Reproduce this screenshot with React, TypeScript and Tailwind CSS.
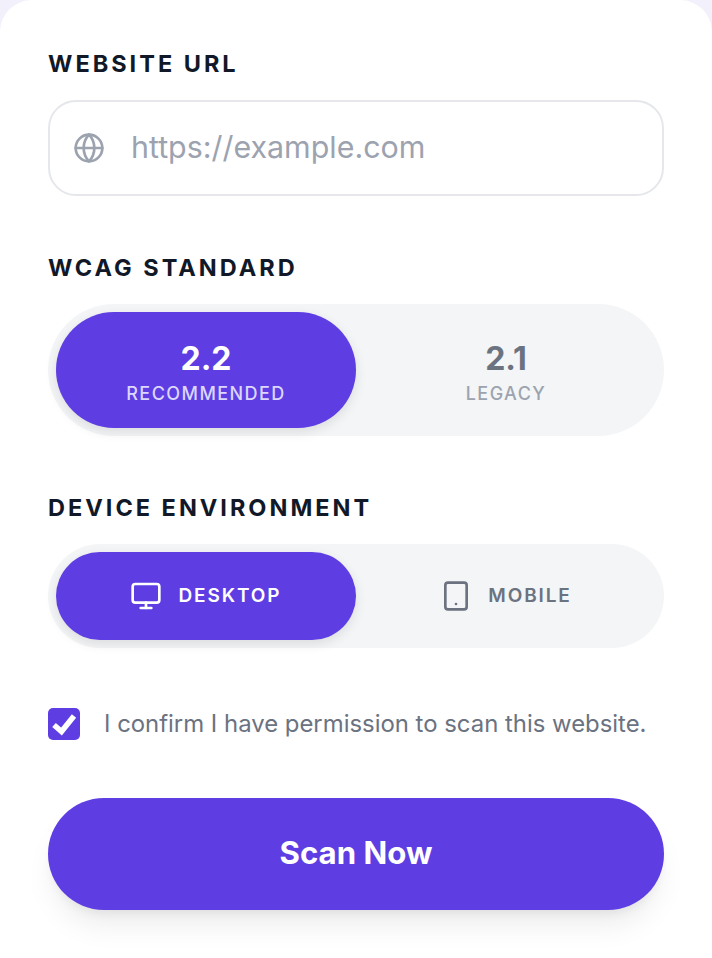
import { Globe, Monitor, Tablet } from "lucide-react";

const FONT = "font-['Inter',sans-serif]";

const labelClass = "text-[23.5px] leading-[28px] font-bold tracking-[3px] text-[#111827]";

export default function App() {
  return (
    <div className={`${FONT} h-[958px] w-[712px] overflow-hidden bg-[#f1f0fb]`}>
      <div className="flex h-full flex-col rounded-t-[32px] bg-white px-12 pt-[50px]">
        <div className={labelClass}>WEBSITE URL</div>

        <div className="mt-[22px] flex h-[96px] items-center gap-[26px] rounded-[28px] border-2 border-[#e5e7eb] bg-white pl-[23px]">
          <Globe size={32} strokeWidth={2} className="text-[#9ca3af]" />
          <span className="pb-[2px] text-[30.4px] leading-none text-[#9ca3af]">https://example.com</span>
        </div>

        <div className={`${labelClass} mt-[58px]`}>WCAG STANDARD</div>

        <div className="mt-[22px] flex h-[132px] rounded-full bg-[#f3f5f7] p-2">
          <div className="flex w-[300px] flex-col items-center justify-center rounded-full bg-[#5e3de3] pt-1 shadow-[0_4px_12px_rgba(0,0,0,0.1)]">
            <span className="text-[32px] leading-[40px] font-bold text-white">2.2</span>
            <span className="mt-[3px] text-[18px] leading-[24px] font-medium tracking-[0.08em] text-[#ddd6fe]">RECOMMENDED</span>
          </div>
          <div className="flex flex-1 flex-col items-center justify-center pt-1">
            <span className="text-[32px] leading-[40px] font-bold text-[#6b7280]">2.1</span>
            <span className="mt-[3px] text-[18px] leading-[24px] font-medium tracking-[0.08em] text-[#9ca3af]">LEGACY</span>
          </div>
        </div>

        <div className={`${labelClass} mt-[58px]`}>DEVICE ENVIRONMENT</div>

        <div className="mt-[22px] flex h-[104px] rounded-full bg-[#f3f5f7] p-2">
          <div className="flex w-[300px] items-center justify-center gap-4 rounded-full bg-[#5e3de3] shadow-[0_4px_12px_rgba(0,0,0,0.1)]">
            <Monitor size={32} strokeWidth={2} className="text-white" />
            <span className="text-[19px] leading-[28px] font-semibold tracking-[0.1em] text-white">DESKTOP</span>
          </div>
          <div className="flex flex-1 items-center justify-center gap-4">
            <Tablet size={32} strokeWidth={2} className="text-[#6b7280]" />
            <span className="text-[19px] leading-[28px] font-semibold tracking-[0.1em] text-[#6b7280]">MOBILE</span>
          </div>
        </div>

        <div className="mt-[60px] flex items-center gap-6">
          <div className="flex h-8 w-8 items-center justify-center rounded-[5px] bg-[#5e3de3]">
            <svg viewBox="0 0 32 32" className="h-8 w-8" fill="none" stroke="white" strokeWidth={5.5}>
              <polyline points="6,17 13.5,23.5 26,8" />
            </svg>
          </div>
          <span className="text-[23.9px] leading-[32px] text-[#6b7280]">I confirm I have permission to scan this website.</span>
        </div>

        <div className="mt-[58px] flex h-[112px] items-center justify-center rounded-full bg-[#5e3de3] pb-[2px] shadow-[0_20px_30px_-6px_rgba(0,0,0,0.08),0_8px_12px_-6px_rgba(0,0,0,0.08)]">
          <span className="text-[31.2px] leading-[40px] font-bold text-white">Scan Now</span>
        </div>
      </div>
    </div>
  );
}
